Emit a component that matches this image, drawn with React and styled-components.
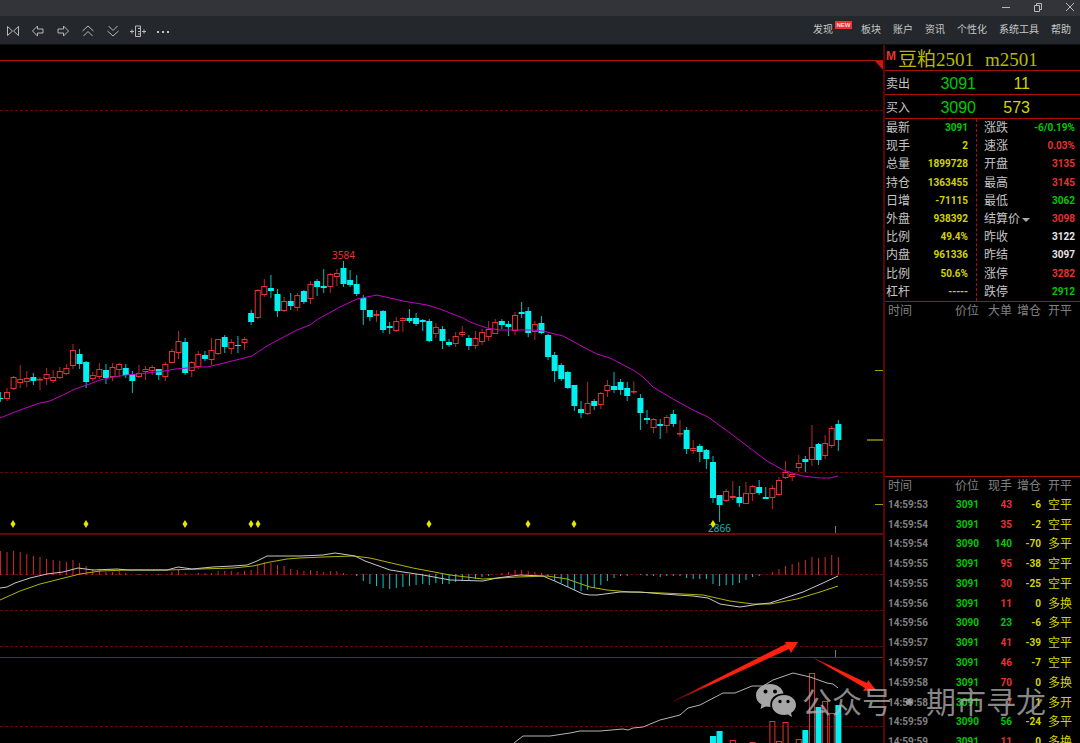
import React from "react";
import styled, { createGlobalStyle } from "styled-components";

const SANS = '"Liberation Sans", "Noto Sans CJK SC", sans-serif';
const NUMERIC = 'Roboto, "Liberation Sans", "Noto Sans CJK SC", sans-serif';

const tone = {
  up: "#e63232",
  down: "#00c800",
  yellow: "#d2d200",
  white: "#e6e6e6",
  label: "#c4c4c4",
  muted: "#808080",
  line: "#a81010",
  border: "#5c0404",
  cyan: "#00f0f0",
};

const Global = createGlobalStyle`
  * { box-sizing: border-box; }
  body { margin: 0; background: #000; font-family: ${SANS}; }
  button { background: none; border: 0; padding: 0; color: inherit; font: inherit; cursor: pointer; }
  table { border-collapse: collapse; border-spacing: 0; table-layout: fixed; width: 100%; }
  td, th { padding: 0; font-weight: inherit; text-align: left; white-space: nowrap; }
`;

const Shell = styled.div`
  display: flex;
  flex-direction: column;
  height: 100vh;
  overflow: hidden;
  background: #000;
`;

const TitleBar = styled.header`
  display: flex;
  justify-content: flex-end;
  gap: 12px;
  height: 16px;
  background: #323439;
`;

const WindowButton = styled.button`
  display: flex;
  align-items: center;
  justify-content: center;
  width: 20px;
  height: 14px;
`;

const Toolbar = styled.div`
  display: flex;
  align-items: center;
  justify-content: space-between;
  height: 29px;
  padding: 0 9px 0 0;
  background: #24272c;
  border-bottom: 1px solid #101113;
`;

const ToolGroup = styled.div`
  display: flex;
  padding-top: 2px;
`;

const ToolButton = styled.button`
  display: flex;
  align-items: center;
  justify-content: center;
  width: 25px;
  height: 20px;
`;

const Menu = styled.nav`
  display: flex;
  gap: 12px;
`;

const MenuLink = styled.a`
  position: relative;
  padding-right: ${(p) => (p.$badge ? "16px" : "0")};
  color: #c6c7c9;
  font-size: 10px;
  line-height: 18px;
  text-decoration: none;
  white-space: nowrap;
`;

const NewBadge = styled.span`
  position: absolute;
  top: 0;
  left: 22px;
  width: 17px;
  height: 8px;
  background: #f03232;
  color: #ffdcdc;
  font: bold 6px/8px "Liberation Sans", sans-serif;
  text-align: center;
`;

const Workspace = styled.main`
  position: relative;
  display: flex;
  flex: 1;
  min-height: 0;
`;

const Charts = styled.section`
  display: flex;
  flex: 1;
  flex-direction: column;
  min-width: 0;
`;

const Pane = styled.svg`
  display: block;
  width: 100%;
  height: ${(p) => p.$height};
  flex: ${(p) => p.$flex || "none"};
  min-height: 0;
`;

const ChartLabel = styled.text`
  font: 10px "Noto Sans", sans-serif;
  fill: ${(p) => p.$color};
`;

const Side = styled.aside`
  display: flex;
  flex: none;
  flex-direction: column;
  width: 197px;
  border-left: 2px solid ${tone.border};
`;

const Contract = styled.h1`
  display: flex;
  flex: none;
  gap: 11px;
  height: 26px;
  margin: 0;
  padding-left: 1px;
  border-bottom: 1px solid ${tone.line};
  color: #b9b900;
  font: 19px/29px "Liberation Serif", "Noto Sans CJK SC", serif;
  white-space: nowrap;
`;

const MainMark = styled.sup`
  width: 12px;
  margin-right: -11px;
  color: ${tone.up};
  font: bold 12px/22px ${SANS};
`;

const BookRow = styled.dl`
  display: flex;
  flex: none;
  height: 24px;
  margin: 0;
  padding-left: 1px;
  border-bottom: 1px solid ${tone.line};
  line-height: 26px;
  dt { width: 49px; color: ${tone.label}; font-size: 12px; }
  dd { margin: 0; font-size: 16px; text-align: right; }
  dd:nth-of-type(1) { width: 41px; color: ${tone.down}; }
  dd:nth-of-type(2) { width: 54px; color: ${tone.yellow}; }
`;

const Quotes = styled.div`
  display: flex;
  flex: none;
  height: 183px;
  border-bottom: 1px solid ${tone.line};
`;

const QuoteTable = styled.table`
  flex: none;
  width: ${(p) => p.$width};
  margin-left: ${(p) => p.$indent};
  th { color: ${tone.label}; font-size: 12px; line-height: 18px; }
`;

const QuoteDivider = styled.div`
  width: 9px;
  border-right: 1px dashed ${tone.line};
`;

const Num = styled.td`
  color: ${(p) => tone[p.$tone]};
  font: bold 10px/18px ${NUMERIC};
  text-align: right;
`;

const SettleButton = styled.button`
  display: flex;
  align-items: center;
  gap: 2px;
`;

const Trades = styled.section`
  flex: none;
  height: ${(p) => p.$height};
  border-bottom: 1px solid ${tone.line};
  &:last-child { border-bottom: 0; }
`;

const TradeTable = styled.table`
  height: ${(p) => p.$height};
  col:nth-child(1) { width: 61px; }
  col:nth-child(2) { width: 33px; }
  col:nth-child(3) { width: 33px; }
  col:nth-child(4) { width: 29px; }
  thead tr { height: 18px; }
  th {
    color: ${tone.muted};
    font-size: 12px;
    line-height: 18px;
    text-align: right;
  }
  td { line-height: 18px; }
  td:first-child, th:first-child { padding-left: 3px; text-align: left; }
  th:last-child { padding-left: 7px; text-align: left; }
`;

const KindCell = styled.td`
  padding-left: 7px;
  color: ${tone.yellow};
  font-size: 12px;
`;

const Arrows = styled.svg`
  position: absolute;
  right: 200px;
  bottom: 38px;
  width: 210px;
  height: 70px;
  pointer-events: none;
`;

const Watermark = styled.div`
  position: absolute;
  right: 34px;
  bottom: 22px;
  display: flex;
  align-items: center;
  gap: 5px;
  color: rgba(180, 180, 180, 0.75);
  font: 30px/42px "Noto Sans CJK SC", sans-serif;
  white-space: nowrap;
  pointer-events: none;
`;

const WatermarkText = styled.span`
  display: flex;
`;

const WatermarkDot = styled.span`
  width: 34px;
  text-align: center;
`;

/* direction, high, body top, body bottom, low */
const candles = `d 392 398 399 402|u 388 392 399 401|u 376 377 389 390|u 365 379 383 388|u 371 378 382 387|d 373 377 381 385|u 377 379 380 390|u 368 374 379 385|u 370 377 381 383|u 367 371 378 379|u 364 368 374 375|u 344 350 366 369|d 349 354 364 369|d 361 362 382 388|u 372 375 379 381|u 363 369 377 379|d 364 370 378 384|u 363 367 377 381|u 363 364 370 377|d 364 368 375 378|d 371 374 381 393|u 365 373 377 378|u 366 369 372 380|u 365 367 371 375|d 369 369 375 380|u 362 364 377 381|u 349 351 363 363|u 331 341 353 359|d 338 342 373 375|u 361 362 371 377|u 351 354 367 369|d 351 355 359 361|u 338 350 360 365|u 339 339 354 355|d 335 337 347 353|u 339 342 349 354|d 336 345 346 353|u 337 339 343 350|d 310 313 322 325|u 289 290 318 319|u 279 286 295 297|d 275 288 291 298|d 289 294 311 317|u 297 301 311 312|d 293 301 306 310|u 293 295 308 311|d 290 291 302 304|u 281 284 299 304|d 279 281 287 296|d 269 286 288 293|u 273 274 287 293|u 269 273 277 286|d 261 268 284 287|d 270 280 285 287|d 275 284 294 296|d 295 298 310 325|d 310 310 317 321|u 310 314 316 322|d 310 311 330 333|d 322 326 328 334|u 317 321 331 332|u 317 318 321 332|d 309 318 321 323|d 313 318 324 326|d 319 320 322 331|d 319 321 341 342|u 323 327 334 338|d 326 329 341 349|d 339 342 345 347|u 332 336 344 347|u 326 332 335 337|d 335 338 346 350|u 331 338 346 349|u 329 332 342 345|u 321 329 337 341|u 319 322 334 334|d 319 321 325 329|d 321 324 327 336|u 312 315 331 335|d 302 312 314 318|d 307 311 333 337|u 321 324 332 340|d 316 323 333 334|d 334 335 357 360|d 352 355 371 382|d 363 365 379 381|d 371 372 388 389|d 385 385 406 411|d 401 409 413 418|u 382 403 414 415|d 399 401 406 410|u 392 393 405 409|u 380 385 391 397|d 372 386 390 393|d 379 382 390 395|d 382 388 396 401|u 381 391 392 394|d 394 398 413 430|d 410 418 420 424|u 418 419 428 433|d 419 424 426 439|u 415 417 426 433|d 410 414 424 427|u 420 433 434 437|d 427 430 449 454|u 440 448 451 454|d 444 446 452 462|d 449 450 459 469|d 456 462 498 503|d 495 495 505 522|u 489 491 501 502|u 481 496 498 500|d 486 497 503 507|u 482 493 504 504|u 485 486 494 501|d 480 487 493 495|d 487 497 499 499|u 485 488 498 509|u 477 480 495 496|u 461 472 478 479|u 473 474 477 481|u 455 463 468 472|d 456 459 462 472|u 425 447 460 466|d 443 444 460 465|u 435 443 456 459|u 426 428 446 448|d 420 424 440 451`
  .split("|")
  .map((row) => {
    const [dir, ...n] = row.split(" ");
    return [dir, ...n.map(Number)];
  });

const average =
  "0,418 20,410 40,403 50,401 63,395 75,389 87,385 100,380 113,377 127,375 147,373 165,371 175,369 200,367 207,367 220,364 248,357 252,356 267,346 280,339 297,330 310,325 318,319 340,307 357,299 377,295 390,298 403,301 427,305 440,309 463,318 470,322 487,328 500,330 533,330 543,331 563,336 587,349 597,354 610,358 633,370 642,376 653,387 673,399 693,410 708,417 730,433 767,461 783,470 802,476 820,478 830,478 838,476";

/* end of each momentum bar; the base line is at 574 */
const momentum = [
  551, 552, 551, 552, 554, 556, 557, 559, 560, 561, 562, 560, 563, 566, 569, 569, 572, 572, 571, 573,
  574, 575, 574, 574, 575, 574, 572, 570, 573, 574, 573, 573, 573, 571, 571, 571, 572, 571, 570, 565,
  562, 563, 565, 566, 569, 570, 571, 570, 571, 572, 571, 571, 573, 574, 576, 581, 584, 586, 588, 589,
  588, 587, 586, 585, 584, 585, 583, 584, 584, 582, 580, 581, 579, 577, 576, 574, 573, 572, 570, 570,
  571, 572, 573, 576, 581, 583, 587, 590, 591, 590, 588, 585, 581, 578, 576, 576, 574, 575, 576, 576,
  577, 576, 576, 576, 578, 579, 579, 579, 584, 586, 585, 585, 583, 580, 577, 576, 574, 572, 569, 566,
  564, 562, 560, 557, 558, 557, 555, 557,
];

const fastLine =
  "0,588 7,587 15,583 30,578 47,574 63,572 78,568 93,570 117,569 128,570 167,570 178,567 192,569 213,567 233,566 247,565 257,561 267,556 300,556 323,555 335,553 342,554 355,556 365,561 390,570 423,575 450,580 483,581 497,578 520,575 543,576 557,582 570,588 583,594 590,595 597,595 620,592 640,592 663,594 693,596 708,598 720,604 740,607 760,604 770,603 803,592 823,583 838,576";
const slowLine =
  "0,600 20,591 40,584 60,579 80,574 100,571 128,570 167,570 200,569 233,568 253,566 270,562 287,559 300,558 323,557 353,556 370,558 387,562 413,568 450,575 483,579 517,577 547,576 567,579 590,587 607,590 630,592 663,593 703,595 730,601 753,604 770,604 797,599 820,592 838,586";
const interestLine =
  "514,743 523,736 550,736 570,733 580,731 600,731 623,729 628,730 633,728 643,727 660,720 680,715 688,708 700,705 723,693 735,693 752,686 763,686 773,680 793,673 810,677 827,683 833,684 838,688";

const volumes = [
  [108, 736], [109, 731], [111, 740], [114, 742], [117, 721], [118, 741], [119, 722],
  [121, 739], [122, 730], [123, 673], [124, 707], [125, 701], [126, 713], [127, 705],
];

const markers = [13, 86, 185, 251, 258, 429, 528, 574, 713];

const barX = (i) => 0.4 + i * 6.598;

const Candle = ({ i, data: [dir, high, top, bottom, low] }) => {
  const x = barX(i);
  const h = Math.max(bottom - top, 1);
  if (dir === "d") {
    return (
      <g fill={tone.cyan}>
        <rect x={x - 0.5} y={high} width="1" height={low - high} opacity="0.8" />
        <rect x={x - 3} y={top} width="6" height={h} />
      </g>
    );
  }
  return (
    <g fill={tone.up}>
      <rect x={x - 0.5} y={high} width="1" height={top - high} opacity="0.8" />
      <rect x={x - 0.5} y={bottom} width="1" height={low - bottom} opacity="0.8" />
      <rect x={x - 2.5} y={top + 0.5} width="5" height={Math.max(h - 1, 0.5)} fill="none" stroke={tone.up} />
    </g>
  );
};

const GridLine = ({ y }) => (
  <line x1="0" x2="100%" y1={y + 0.5} y2={y + 0.5} stroke="#680404" strokeDasharray="3 2" />
);

const PricePane = () => (
  <Pane $height="490px" role="img" aria-label="豆粕2501 K线">
    <svg y="-45" overflow="visible">
      <line x1="0" x2="100%" y1="60.5" y2="60.5" stroke="#b41212" />
      <svg x="100%" overflow="visible">
        <path d="M-8 61H0V70Z" fill="#c81a0c" />
        <path d="M-8 370.5H0M-8 504.5H0" stroke="#a0a000" />
        <path d="M-16 440H0" stroke="#6e6e00" strokeWidth="2" />
      </svg>
      <GridLine y={110} />
      <GridLine y={472} />
      {candles.map((c, i) => (
        <Candle key={i} i={i} data={c} />
      ))}
      <polyline points={average} fill="none" stroke="#c400c4" />
      <ChartLabel x="332" y="259" $color="#e63232">3584</ChartLabel>
      <ChartLabel x="708" y="532" $color="#10b4b4">2866</ChartLabel>
      {markers.map((x) => (
        <path key={x} d={`M${x} 520l2.5 4l-2.5 4l-2.5-4z`} fill="#e6e600" />
      ))}
      <path d="M835.5 526V533" stroke="#787878" />
      <rect x="0" y="533" width="100%" height="2" fill="#640808" />
    </svg>
  </Pane>
);

const MomentumPane = () => (
  <Pane $height="123px" role="img" aria-label="MACD">
    <svg y="-535" overflow="visible">
      <GridLine y={574} />
      <GridLine y={610} />
      <GridLine y={646} />
      {momentum.map((end, i) =>
        end === 574 ? null : (
          <rect
            key={i}
            x={barX(i) - 0.5}
            y={Math.min(end, 574)}
            width="1"
            height={Math.abs(end - 574) + (end < 574 ? 1 : 0)}
            fill={end < 574 ? "#d22c2c" : "#00c8c8"}
          />
        )
      )}
      <polyline points={slowLine} fill="none" stroke="#b4b400" />
      <polyline points={fastLine} fill="none" stroke="#c8c8c8" />
      <path d="M835.5 650V657" stroke="#787878" />
      <line x1="0" x2="100%" y1="657.5" y2="657.5" stroke={tone.line} />
    </svg>
  </Pane>
);

const VolumePane = () => (
  <Pane $height="auto" $flex="1" role="img" aria-label="成交量">
    <svg y="-658" overflow="visible">
      <GridLine y={726} />
      {volumes.map(([i, top]) =>
        candles[i][0] === "d" ? (
          <rect key={i} x={barX(i) - 3} y={top} width="6" height={760 - top} fill={tone.cyan} />
        ) : (
          <rect key={i} x={barX(i) - 2.5} y={top + 0.5} width="5" height={760 - top} fill="none" stroke={tone.up} />
        )
      )}
      <polyline points={interestLine} fill="none" stroke="#b4b4b4" />
    </svg>
  </Pane>
);

const Icon = ({ children, size = 14 }) => (
  <svg width={size} height={size} viewBox={`0 0 ${size} ${size}`} fill="none" stroke="#b8b8ba" aria-hidden="true">
    {children}
  </svg>
);

const tools = [
  ["缩放", <path key="p" d="M1.5 2.5V11.5L6.5 7L1.5 2.5M12.5 2.5V11.5L7.5 7L12.5 2.5" />],
  ["后退", <path key="p" d="M1.5 7L6.5 2V5H12V9H6.5V12Z" />],
  ["前进", <path key="p" d="M12.5 7L7.5 2V5H2V9H7.5V12Z" />],
  ["上移", <path key="p" d="M1.5 7L7 2L12.5 7M2.5 12L7 7.5L11.5 12" />],
  ["下移", <path key="p" d="M1.5 7L7 12L12.5 7M2.5 2L7 6.5L11.5 2" />],
];

const menu = ["发现", "板块", "账户", "资讯", "个性化", "系统工具", "帮助"];

const leftQuotes = [
  ["最新", "3091", "down"],
  ["现手", "2", "yellow"],
  ["总量", "1899728", "yellow"],
  ["持仓", "1363455", "yellow"],
  ["日增", "-71115", "yellow"],
  ["外盘", "938392", "yellow"],
  ["比例", "49.4%", "yellow"],
  ["内盘", "961336", "yellow"],
  ["比例", "50.6%", "yellow"],
  ["杠杆", "-----", "yellow"],
];
const rightQuotes = [
  ["涨跌", "-6/0.19%", "down"],
  ["速涨", "0.03%", "up"],
  ["开盘", "3135", "up"],
  ["最高", "3145", "up"],
  ["最低", "3062", "down"],
  ["结算价", "3098", "up"],
  ["昨收", "3122", "white"],
  ["昨结", "3097", "white"],
  ["涨停", "3282", "up"],
  ["跌停", "2912", "down"],
];

const trades = [
  ["14:59:53", "3091", "43", "up", "-6", "空平"],
  ["14:59:54", "3091", "35", "up", "-2", "空平"],
  ["14:59:54", "3090", "140", "down", "-70", "多平"],
  ["14:59:55", "3091", "95", "up", "-38", "空平"],
  ["14:59:55", "3091", "30", "up", "-25", "空平"],
  ["14:59:56", "3091", "11", "up", "0", "多换"],
  ["14:59:56", "3090", "23", "down", "-6", "多平"],
  ["14:59:57", "3091", "41", "up", "-39", "空平"],
  ["14:59:57", "3091", "46", "up", "-7", "空平"],
  ["14:59:58", "3091", "70", "up", "0", "多换"],
  ["14:59:58", "3091", "7", "up", "1", "多开"],
  ["14:59:59", "3090", "56", "down", "-24", "多平"],
  ["14:59:59", "3091", "11", "up", "0", "多换"],
];

const QuoteRows = ({ rows }) => (
  <tbody>
    {rows.map(([name, value, color], i) => (
      <tr key={i}>
        <th scope="row">
          {name === "结算价" ? (
            <SettleButton type="button">
              {name}
              <svg width="8" height="5" viewBox="0 0 8 5" aria-hidden="true">
                <path d="M0 1H8L4 5Z" fill="#a8a8a8" />
              </svg>
            </SettleButton>
          ) : (
            name
          )}
        </th>
        <Num $tone={color}>{value}</Num>
      </tr>
    ))}
  </tbody>
);

const TradeHead = ({ third }) => (
  <>
    <colgroup>
      <col />
      <col />
      <col />
      <col />
      <col />
    </colgroup>
    <thead>
      <tr>
        {["时间", "价位", third, "增仓", "开平"].map((t) => (
          <th key={t} scope="col">{t}</th>
        ))}
      </tr>
    </thead>
  </>
);

export default function App() {
  return (
    <Shell>
      <Global />
      <TitleBar>
        <WindowButton type="button" aria-label="最小化">
          <Icon size={10}><path d="M1 5.5H9" /></Icon>
        </WindowButton>
        <WindowButton type="button" aria-label="还原">
          <Icon size={10}><path d="M1.5 3.5H6.5V9.5H1.5ZM3.5 3V1.5H8.5V7.5H7" /></Icon>
        </WindowButton>
        <WindowButton type="button" aria-label="关闭">
          <Icon size={10}><path d="M1 1L9 9M9 1L1 9" /></Icon>
        </WindowButton>
      </TitleBar>
      <Toolbar>
        <ToolGroup>
          {tools.map(([name, path]) => (
            <ToolButton key={name} type="button" aria-label={name}>
              <Icon size={14}>{path}</Icon>
            </ToolButton>
          ))}
          <ToolButton type="button" aria-label="间距">
            <Icon size={18}>
              <path d="M6.5 4V14.5H11.5V4ZM9 6.5H11M9 9.5H11M9 12H11" />
              <path d="M1 9.500H5M13 9.500H17M3 7.500V11.500M15 7.500V11.500" />
            </Icon>
          </ToolButton>
          <ToolButton type="button" aria-label="更多">
            <Icon>
              <g fill="#c4c4c4" stroke="none">
                <rect x="1" y="7" width="2" height="2" />
                <rect x="6" y="7" width="2" height="2" />
                <rect x="11" y="7" width="2" height="2" />
              </g>
            </Icon>
          </ToolButton>
        </ToolGroup>
        <Menu>
          {menu.map((m, i) => (
            <MenuLink key={m} href="#" $badge={i === 0}>
              {m}
              {i === 0 && <NewBadge>NEW</NewBadge>}
            </MenuLink>
          ))}
        </Menu>
      </Toolbar>
      <Workspace>
        <Charts>
          <PricePane />
          <MomentumPane />
          <VolumePane />
        </Charts>
        <Side>
          <Contract>
            <MainMark>M</MainMark>
            <span>豆粕2501</span>
            <span>m2501</span>
          </Contract>
          <BookRow>
            <dt>卖出</dt>
            <dd>3091</dd>
            <dd>11</dd>
          </BookRow>
          <BookRow>
            <dt>买入</dt>
            <dd>3090</dd>
            <dd>573</dd>
          </BookRow>
          <Quotes>
            <QuoteTable $width="82px" $indent="1px">
              <colgroup>
                <col width="30" />
                <col />
              </colgroup>
              <QuoteRows rows={leftQuotes} />
            </QuoteTable>
            <QuoteDivider />
            <QuoteTable $width="91px" $indent="7px">
              <colgroup>
                <col width="46" />
                <col />
              </colgroup>
              <QuoteRows rows={rightQuotes} />
            </QuoteTable>
          </Quotes>
          <Trades $height="175px">
            <TradeTable>
              <TradeHead third="大单" />
            </TradeTable>
          </Trades>
          <Trades $height="auto">
            <TradeTable $height="275px">
              <TradeHead third="现手" />
              <tbody>
                {trades.map(([time, price, lots, color, delta, kind], i) => (
                  <tr key={i}>
                    <Num $tone="muted">{time}</Num>
                    <Num $tone="down">{price}</Num>
                    <Num $tone={color}>{lots}</Num>
                    <Num $tone="yellow">{delta}</Num>
                    <KindCell>{kind}</KindCell>
                  </tr>
                ))}
              </tbody>
            </TradeTable>
          </Trades>
        </Side>
        <Arrows viewBox="0 0 210 70" aria-hidden="true">
          <defs>
            <linearGradient id="tail" x1="0" x2="1">
              <stop offset="0" stopColor="#ff2010" stopOpacity="0.2" />
              <stop offset="0.3" stopColor="#ff2010" />
            </linearGradient>
          </defs>
          <path d="M3 66L116 9L115 7L128 7L121 18L119 14L3 67Z" fill="url(#tail)" />
          <path d="M138 20L197 48L198 45L206 55L193 56L195 53Z" fill="url(#tail)" />
        </Arrows>
        <Watermark>
          <svg width="41" height="34" viewBox="0 0 41 34" aria-hidden="true">
            <path
              fillRule="evenodd"
              fill="#a6a6a6"
              d="M14 1C6 1 0 6 0 12.500C0 16.500 2 19.500 5.500 21.500L4.500 26L9.500 23.500L14.500 24C13 16 19 10.500 27.500 10.500C26.500 5 21 1 14 1ZM9.500 6.500A2 2 0 1 1 9.500 10.500A2 2 0 1 1 9.500 6.500ZM19 6.500A2 2 0 1 1 19 10.500A2 2 0 1 1 19 6.500Z"
            />
            <path
              fillRule="evenodd"
              fill="#a6a6a6"
              d="M28 12C21 12 16 16.500 16 22C16 27.500 21 32 28 32L32 31.500L36 34L35 30C38 28 40 25.500 40 22C40 16.500 35 12 28 12ZM24 16.800A1.700 1.700 0 1 1 24 20.200A1.700 1.700 0 1 1 24 16.800ZM32 16.800A1.700 1.700 0 1 1 32 20.200A1.700 1.700 0 1 1 32 16.800Z"
            />
          </svg>
          <WatermarkText>
            公众号<WatermarkDot>·</WatermarkDot>期市寻龙
          </WatermarkText>
        </Watermark>
      </Workspace>
    </Shell>
  );
}
